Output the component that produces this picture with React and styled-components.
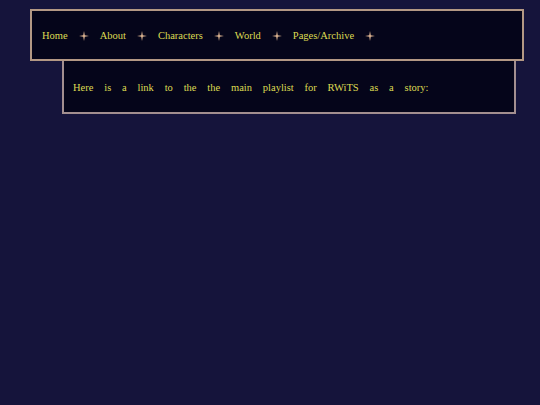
import styled, { createGlobalStyle } from 'styled-components';

const GlobalStyle = createGlobalStyle`
  html, body {
    margin: 0;
    padding: 0;
    background-color: #15143b;
    min-height: 100%;
  }
  body {
    font-family: "Liberation Serif", "Times New Roman", serif;
  }
`;

const links = ['Home', 'About', 'Characters', 'World', 'Pages/Archive'];

const Sparkle = () => (
  <svg width="10" height="10" viewBox="0 0 10 10">
    <path
      d="M5 0 L5.8 4.2 L10 5 L5.8 5.8 L5 10 L4.2 5.8 L0 5 L4.2 4.2 Z"
      fill="#deb592"
    />
  </svg>
);

const App = () => {
  return (
    <Page>
      <GlobalStyle />
      <NavBar>
        {links.map((link) => (
          <NavItem key={link}>
            <NavLink href="#">{link}</NavLink>
            <StarWrap>
              <Sparkle />
            </StarWrap>
          </NavItem>
        ))}
      </NavBar>
      <ContentBox>
        <Text>Here is a link to the the main playlist for RWiTS as a story:</Text>
      </ContentBox>
    </Page>
  );
};

export default App;

const Page = styled.div`
  width: 540px;
  height: 405px;
  box-sizing: border-box;
  padding: 9px 16px 0 30px;
  display: flex;
  flex-direction: column;
`;

const NavBar = styled.nav`
  height: 52px;
  box-sizing: border-box;
  border: 2px solid #b39884;
  background-color: #05051a;
  display: flex;
  align-items: center;
  padding: 2px 0 0 10px;
`;

const NavItem = styled.div`
  display: flex;
  align-items: center;
`;

const NavLink = styled.a`
  color: #dedb52;
  text-decoration: none;
  font-size: 10.5px;
  line-height: 1;
`;

const StarWrap = styled.span`
  display: flex;
  margin: 0 11px;
`;

const ContentBox = styled.section`
  height: 53px;
  box-sizing: border-box;
  margin: 0 8px 0 32px;
  border: 2px solid #a38f90;
  border-top: none;
  background-color: #05051a;
  display: flex;
  align-items: center;
  padding: 2px 0 0 9px;
`;

const Text = styled.p`
  margin: 0;
  color: #dedb52;
  font-size: 10.5px;
  word-spacing: 8.2px;
`;
